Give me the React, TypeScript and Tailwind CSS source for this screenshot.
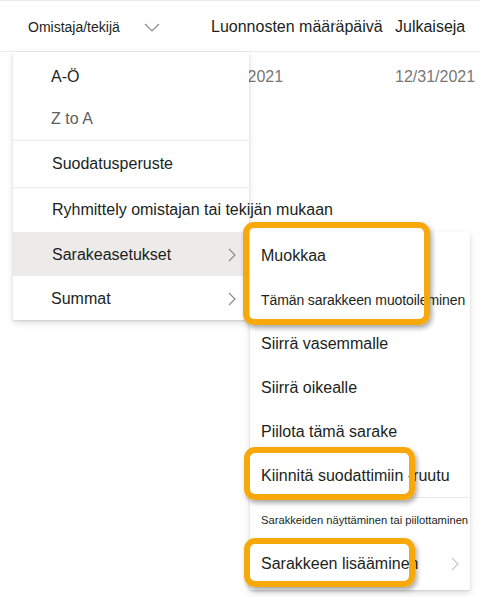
import React from "react";

const font = { fontFamily: '"Segoe UI", "Liberation Sans", Arial, sans-serif' };

function Chevron({ className }: { className?: string }) {
  return (
    <svg width="8" height="14" viewBox="0 0 8 14" className={className} fill="none">
      <path d="M1 1l6 6-6 6" stroke="currentColor" strokeWidth="1.1" />
    </svg>
  );
}

function Highlight({ className }: { className: string }) {
  return (
    <div
      className={`absolute rounded-[11px] border-[6px] border-[#f7a90c] shadow-[2px_3px_5px_rgba(0,0,0,0.35)] pointer-events-none ${className}`}
    />
  );
}

export default function App() {
  return (
    <div className="relative w-[480px] h-[597px] bg-white overflow-hidden text-[#323130]" style={font}>
      {/* header row */}
      <div className="h-[52px] flex items-center border-t border-b border-[#edebe9] pt-[2px]">
        <div className="w-[211px] flex items-center pl-[28px] text-[14px] text-[#201f1e]">
          <span>Omistaja/tekijä</span>
          <svg width="16" height="9" viewBox="0 0 16 9" className="ml-[24px] text-[#8a8886]" fill="none">
            <path d="M1 1l7 7 7-7" stroke="currentColor" strokeWidth="1.1" />
          </svg>
        </div>
        <div className="relative w-[184px] text-[16px] text-[#201f1e] whitespace-nowrap">
          Luonnosten määräpäivä
          <svg width="12" height="7" viewBox="0 0 12 7" className="absolute left-[120px] top-[5px] text-[#c8c6c4]" fill="none">
            <path d="M1 1l5 5 5-5" stroke="currentColor" strokeWidth="1" />
          </svg>
        </div>
        <div className="text-[16px] text-[#201f1e]">Julkaiseja</div>
      </div>
      {/* data row */}
      <div className="h-[50px] flex items-center text-[16px] text-[#797775] whitespace-nowrap">
        <div className="w-[203px] shrink-0" />
        <div className="w-[192px] shrink-0">12/31/2021</div>
        <div className="shrink-0">12/31/2021 12:00</div>
      </div>

      {/* main menu */}
      <div className="absolute left-[13px] top-[52px] w-[236px] bg-white shadow-[0_3px_7px_rgba(0,0,0,0.13),0_0.6px_1.8px_rgba(0,0,0,0.11)] text-[16px]">
        <div className="h-[46px] flex items-center pl-[38px] pt-[3px] text-[#201f1e]">A-Ö</div>
        <div className="h-[42px] flex items-center pl-[38px] text-[#605e5c]">Z to A</div>
        <div className="h-px bg-[#edebe9]" />
        <div className="h-[46px] flex items-center pl-[39px] text-[#201f1e]">Suodatusperuste</div>
        <div className="h-px bg-[#edebe9]" />
        <div className="h-[44px] flex items-center pl-[39px] text-[#201f1e] whitespace-nowrap">
          Ryhmittely omistajan tai tekijän mukaan
        </div>
        <div className="h-[44px] flex items-center justify-between pl-[39px] pr-[13px] pt-[2px] bg-[#edebe9] text-[#201f1e]">
          <span>Sarakeasetukset</span>
          <Chevron className="text-[#8a8886]" />
        </div>
        <div className="h-[44px] flex items-center justify-between pl-[38px] pr-[13px] pt-[2px] text-[#201f1e]">
          <span>Summat</span>
          <Chevron className="text-[#8a8886]" />
        </div>
      </div>

      {/* submenu */}
      <div className="absolute left-[250px] top-[232px] w-[220px] pt-[2px] pb-[4px] bg-white shadow-[0_3px_7px_rgba(0,0,0,0.13),0_0.6px_1.8px_rgba(0,0,0,0.11)] text-[16px] text-[#201f1e]">
        <div className="h-[44px] flex items-center pl-[11px]">Muokkaa</div>
        <div className="h-[44px] flex items-center pl-[11px] text-[14px] whitespace-nowrap tracking-[-0.1px]">
          Tämän sarakkeen muotoileminen
        </div>
        <div className="h-[44px] flex items-center pl-[11px]">Siirrä vasemmalle</div>
        <div className="h-[44px] flex items-center pl-[11px]">Siirrä oikealle</div>
        <div className="h-[44px] flex items-center pl-[11px]">Piilota tämä sarake</div>
        <div className="h-[43px] flex items-center pl-[11px] whitespace-nowrap">Kiinnitä suodattimiin -ruutu</div>
        <div className="h-px bg-[#edebe9]" />
        <div className="h-[44px] flex items-center pl-[11px] text-[11.2px] whitespace-nowrap">
          Sarakkeiden näyttäminen tai piilottaminen
        </div>
        <div className="h-[44px] flex items-center justify-between pl-[11px] pr-[11px]">
          <span>Sarakkeen lisääminen</span>
          <Chevron className="text-[#c8c6c4]" />
        </div>
      </div>

      {/* callout boxes */}
      <Highlight className="left-[243px] top-[222px] w-[187px] h-[103px]" />
      <Highlight className="left-[244px] top-[447px] w-[171px] h-[53px]" />
      <Highlight className="left-[244px] top-[538px] w-[171px] h-[49px]" />
    </div>
  );
}
